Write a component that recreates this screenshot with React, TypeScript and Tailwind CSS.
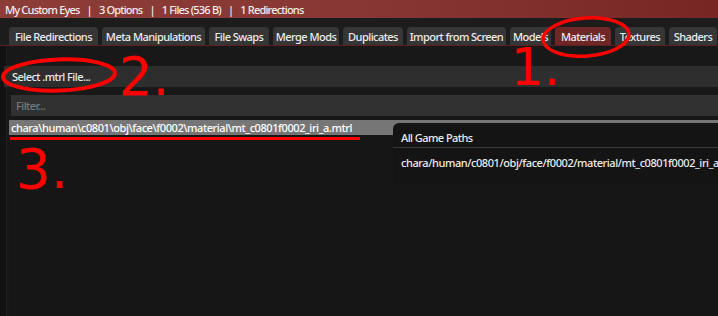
import React from "react";

const tabs: { t: string; w: string }[] = [
  { t: "File Redirections", w: "w-[89px]" },
  { t: "Meta Manipulations", w: "w-[103px]" },
  { t: "File Swaps", w: "w-[60px]" },
  { t: "Merge Mods", w: "w-[66px]" },
  { t: "Duplicates", w: "w-[60px]" },
  { t: "Import from Screen", w: "w-[99px]" },
  { t: "Models", w: "w-[41px]" },
  { t: "Materials", w: "w-[56px]" },
  { t: "Textures", w: "w-[50px]" },
  { t: "Shaders", w: "w-[48px]" },
];

export default function App() {
  const path = "chara\\human\\c0801\\obj\\face\\f0002\\material\\mt_c0801f0002_iri_a.mtrl";
  const gamePath = "chara/human/c0801/obj/face/f0002/material/mt_c0801f0002_iri_a.mtrl";
  return (
    <div
      className="relative w-[718px] h-[316px] overflow-hidden bg-[#181818] text-[#ececec] text-[11px] tracking-[-0.55px] leading-none"
      style={{ fontFamily: '"Noto Sans", "DejaVu Sans", sans-serif' }}
    >
      {/* title bar */}
      <div className="h-[18px] flex items-center gap-[7px] pl-[5px] bg-gradient-to-r from-[#8c3d38] via-[#883834] to-[#762724] font-medium text-[11px] tracking-[-0.8px] text-[#f2eeee] whitespace-nowrap">
        <span>My Custom Eyes</span>
        <span>|</span>
        <span>3 Options</span>
        <span>|</span>
        <span>1 Files (536 B)</span>
        <span>|</span>
        <span>1 Redirections</span>
      </div>

      {/* tab bar */}
      <div className="h-[28px] bg-[#1c1c1c] flex items-end gap-[4px] pl-[9px] border-b border-[#5a1f1f] whitespace-nowrap">
        {tabs.map(({ t, w }) => (
          <div
            key={t}
            className={
              "h-[18px] shrink-0 flex items-center justify-center rounded-t-[4px] font-medium " +
              w +
              " " +
              (t === "Materials" ? "bg-[#6f2626]" : "bg-[#363636]")
            }
          >
            {t}
          </div>
        ))}
      </div>

      {/* content */}
      <div className="flex h-[270px]">
        <div className="w-[7px] shrink-0 bg-[#111111] border-r border-[#1f1f1f]" />
        <div className="flex-1 flex flex-col">
          <div className="h-[20px]" />
          <div className="h-[21px] ml-[-3px] bg-[#2e2e2e] flex items-center pl-[8px] font-medium">
            Select .mtrl File...
          </div>
          <div className="h-[8px]" />
          <div className="h-[21px] ml-[4px] bg-[#313131] flex items-center pl-[5px] text-[#7a7a7a] font-medium">
            Filter...
          </div>
          <div className="h-[4px]" />
          <div className="flex-1 ml-[2px] bg-[#161616] flex flex-col">
            <div className="h-[15px] bg-[#767676] flex items-center pl-[2px] text-white font-medium tracking-[-0.43px] whitespace-nowrap">
              {path}
            </div>
          </div>
        </div>
      </div>

      {/* tooltip popup */}
      <div className="absolute left-[393px] top-[123px] w-[340px] h-[62px] bg-[#141414] rounded-tl-[6px] flex flex-col font-medium whitespace-nowrap">
        <div className="h-[25px] flex items-center pl-[8px] pt-[5px] border-b border-[#3a3a3a]">All Game Paths</div>
        <div className="h-[29px] flex items-center pl-[8px] tracking-[-0.43px]">{gamePath}</div>
      </div>

      {/* red annotations */}
      <svg className="absolute left-0 top-0 pointer-events-none" width="718" height="316">
        <ellipse cx="586" cy="37" rx="43" ry="19" fill="none" stroke="#ff0000" strokeWidth="3.5" transform="rotate(-4 586 37)" />
        <ellipse cx="59" cy="75" rx="56" ry="15.5" fill="none" stroke="#ff0000" strokeWidth="4" transform="rotate(-2 59 75)" />
        <rect x="10" y="137" width="350" height="3" fill="#ff0000" />
      </svg>
      <div
        className="absolute left-[511px] top-[41px] text-[52px] tracking-normal leading-none text-[#ff0000]"
        style={{ fontFamily: '"DejaVu Sans", sans-serif' }}
      >
        1.
      </div>
      <div
        className="absolute left-[119px] top-[50px] text-[53px] tracking-normal leading-none text-[#ff0000]"
        style={{ fontFamily: '"DejaVu Sans", sans-serif' }}
      >
        2.
      </div>
      <div
        className="absolute left-[16px] top-[142px] text-[55px] tracking-normal leading-none text-[#ff0000]"
        style={{ fontFamily: '"DejaVu Sans", sans-serif' }}
      >
        3.
      </div>
    </div>
  );
}
